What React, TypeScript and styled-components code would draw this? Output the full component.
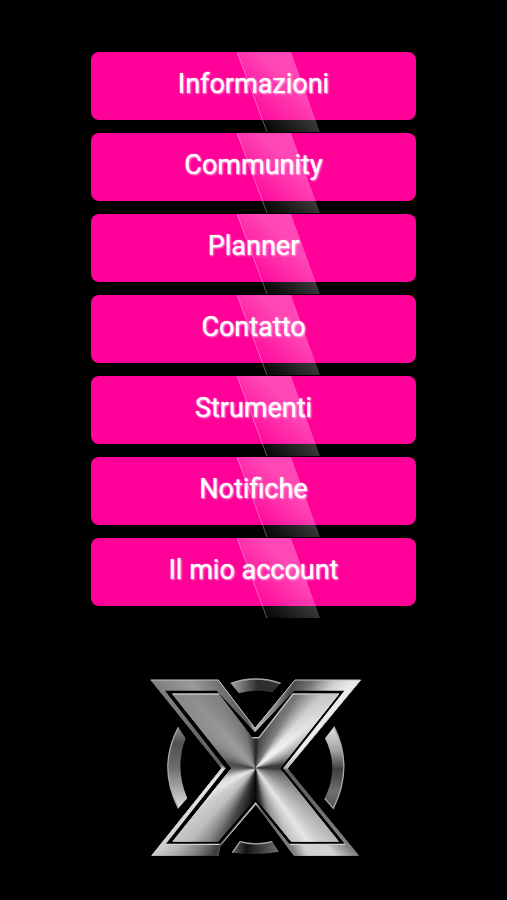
import React from 'react';
import styled, { createGlobalStyle } from 'styled-components';

const GlobalStyle = createGlobalStyle`
  body {
    margin: 0;
    background: #000;
    font-family: Roboto, 'Liberation Sans', sans-serif;
  }
`;

const Page = styled.main`
  display: flex;
  flex-direction: column;
  align-items: center;
  gap: 64px;
  box-sizing: border-box;
  min-height: 100vh;
  padding: 52px 0 28px;
  background: #000;
`;

const Menu = styled.nav`
  display: flex;
  flex-direction: column;
  gap: 13px;
  width: 64%;
`;

const MenuButton = styled.button`
  position: relative;
  height: 68px;
  padding: 0 0 4px;
  border: 0;
  border-radius: 8px;
  background: #ff0098;
  color: #fff;
  font: 400 27px/32px Roboto, 'Liberation Sans', sans-serif;
  text-shadow: 0 0 1px #ffd8f2, 1px 1px 2px #ffa0dc;
  cursor: pointer;
`;

const Shine = styled.svg`
  position: absolute;
  top: 0;
  left: 45%;
  width: 84px;
  height: 80px;
  pointer-events: none;
`;

const Logo = styled.svg`
  display: block;
  width: 230px;
  height: 200px;
`;

const items = ['Informazioni', 'Community', 'Planner', 'Contatto', 'Strumenti', 'Notifiche', 'Il mio account'];

type Stop = [angle: number, grey: number];

const face: Stop[] = [
  [0, 35], [8, 75], [20, 105], [29, 130], [36, 190], [42, 235], [51, 245], [58, 205],
  [70, 140], [82, 60], [91, 60], [100, 105], [115, 140], [128, 175], [138, 205], [144, 230],
  [152, 200], [163, 140], [172, 50], [180, 10], [190, 30], [203, 70], [213, 140], [222, 190],
  [233, 205], [241, 230], [250, 220], [260, 155], [270, 90], [280, 75], [290, 115], [303, 145],
  [318, 160], [331, 140], [343, 120], [352, 75], [360, 35],
];

const frame: Stop[] = [
  [0, 190], [18, 130], [24, 75], [33, 120], [42, 205], [48, 235], [65, 240], [88, 180],
  [94, 95], [118, 100], [130, 130], [137, 210], [148, 210], [155, 130], [170, 90], [180, 190],
  [198, 130], [205, 60], [214, 125], [224, 180], [232, 215], [250, 235], [268, 220], [275, 90],
  [300, 105], [310, 130], [322, 155], [335, 115], [350, 90], [360, 190],
];

const greyAt = (stops: Stop[], angle: number) => {
  const next = stops.findIndex(([a]) => a > angle);
  const [a0, g0] = stops[next - 1];
  const [a1, g1] = stops[next];
  return Math.round(g0 + ((g1 - g0) * (angle - a0)) / (a1 - a0));
};

const point = (degrees: number) => {
  const t = (degrees * Math.PI) / 180;
  return `${350 + 460 * Math.sin(t)},${295 - 460 * Math.cos(t)}`;
};

function Sweep({ stops, clip }: { stops: Stop[]; clip: string }) {
  return (
    <g clipPath={`url(#${clip})`}>
      {Array.from({ length: 360 }, (_, angle) => {
        const g = greyAt(stops, angle);
        return (
          <polygon key={angle} points={`350,295 ${point(angle)} ${point(angle + 3)}`} fill={`rgb(${g},${g},${g})`} />
        );
      })}
    </g>
  );
}

const outer = '35,30 238,30 348,175 468,30 665,30 445,295 660,557 465,557 350,403 245,525 238,557 38,557 248,295';
const channel = '78,62 233,62 348,187 466,62 616,62 432,295 618,523 452,523 350,396 242,523 80,523 260,295';
const inner = '100,72 240,72 340,203 360,203 462,72 600,72 423,295 600,515 457,515 350,385 237,515 100,515 277,295';

function XLogo() {
  return (
    <Logo viewBox="0 0 690 600" role="img" aria-label="X">
      <defs>
        <clipPath id="frame"><polygon points={outer} /></clipPath>
        <clipPath id="face"><polygon points={inner} /></clipPath>
        <linearGradient id="left" x1="0" y1="0" x2="0" y2="1">
          <stop offset="0" stopColor="#858585" />
          <stop offset=".2" stopColor="#515151" />
          <stop offset=".5" stopColor="#6d6d6d" />
          <stop offset="1" stopColor="#e0e0e0" />
        </linearGradient>
        <linearGradient id="right" x1="0" y1="0" x2="0" y2="1">
          <stop offset="0" stopColor="#e4e4e4" />
          <stop offset=".3" stopColor="#a0a0a0" />
          <stop offset=".52" stopColor="#3e3e3e" />
          <stop offset=".8" stopColor="#707070" />
          <stop offset="1" stopColor="#505050" />
        </linearGradient>
        <linearGradient id="top">
          <stop offset="0" stopColor="#a8a8a8" />
          <stop offset=".55" stopColor="#2c2c2c" />
          <stop offset="1" stopColor="#333" />
        </linearGradient>
        <linearGradient id="bottom">
          <stop offset="0" stopColor="#666" />
          <stop offset=".3" stopColor="#111" />
          <stop offset="1" stopColor="#707070" />
        </linearGradient>
        <linearGradient id="shade" x1="0" y1="0" x2="0" y2="1">
          <stop offset="0" stopColor="#555" stopOpacity=".25" />
          <stop offset=".4" stopColor="#555" stopOpacity="0" />
        </linearGradient>
      </defs>
      <path d="M275 40Q350 14 425 40L400 67Q350 56 300 70Z" fill="url(#top)" />
      <path d="M118 172Q55 290 118 415L145 385Q106 295 140 205Z" fill="url(#left)" />
      <path d="M585 170Q645 290 583 415L557 385Q602 293 558 205Z" fill="url(#right)" />
      <path d="M303 515Q350 528 400 515L420 545Q350 558 280 548Z" fill="url(#bottom)" />
      <path
        d="M275 40Q350 14 425 40M118 172Q55 290 118 415M585 170Q645 290 583 415L557 385M280 548L303 515Q350 528 400 515"
        fill="none"
        stroke="#a8a8a8"
        strokeWidth="4"
      />
      <polygon points={outer} fill="#000" stroke="#000" strokeWidth="18" />
      <Sweep stops={frame} clip="frame" />
      <polygon points={channel} fill="#000" />
      <path d="M35 30H238L348 175L468 30H665L445 295M350 403L245 525M248 295L38 557" fill="none" stroke="#c4c4c4" strokeWidth="3" />
      <path d="M80 523H242M452 523H618" fill="none" stroke="#d4d4d4" strokeWidth="4" />
      <Sweep stops={face} clip="face" />
      <polygon points={inner} fill="url(#shade)" />
      <path d="M100 72H240M340 203H360L462 72H600" fill="none" stroke="#c4c4c4" strokeWidth="4" />
    </Logo>
  );
}

export default function App() {
  return (
    <>
      <GlobalStyle />
      <Page>
        <Menu>
          {items.map((label, i) => (
            <MenuButton key={label} type="button">
              {label}
              <Shine viewBox="0 0 84 80" aria-hidden="true">
                <defs>
                  <linearGradient id={`shine${i}`} gradientUnits="userSpaceOnUse" x1="25" y1="80" x2="64" y2="40">
                    <stop offset="0" stopColor="#fff" stopOpacity="0" />
                    <stop offset="1" stopColor="#fff" stopOpacity=".28" />
                  </linearGradient>
                </defs>
                <path d="M0 0H54L83 80H30Z" fill={`url(#shine${i})`} />
                <path d="M0 0L30 80" stroke="#fff" strokeOpacity=".35" />
              </Shine>
            </MenuButton>
          ))}
        </Menu>
        <XLogo />
      </Page>
    </>
  );
}
